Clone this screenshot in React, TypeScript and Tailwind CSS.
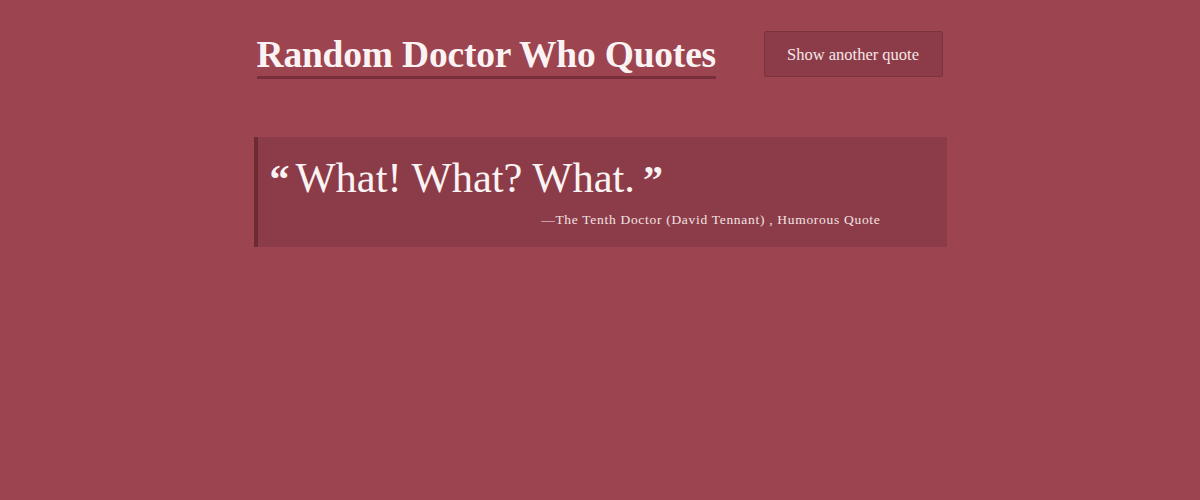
export default function App() {
  return (
    <div className="min-h-screen w-full bg-[#9c4450] font-['Liberation_Serif',serif] text-[#fbf3f3]">
      <div className="mx-auto w-[693px]">
        {/* Header */}
        <div className="flex items-start justify-between pt-[34px]">
          <h1 className="ml-[3px] inline-block border-b-[3px] border-[#77303b] text-[37.5px] font-bold leading-[42px] tracking-[-0.2px]">
            Random Doctor Who Quotes
          </h1>
          <button className="mr-[4px] -mt-[3px] h-[46px] w-[179px] rounded-[2px] border border-[#7a323d] bg-[#8c3c48] pt-[3px] text-[16.5px] text-[#f4e6e8]">
            Show another quote
          </button>
        </div>

        {/* Quote */}
        <div className="mt-[58px] h-[110px] border-l-4 border-[#6c2a34] bg-[#8c3c48] pl-[12px] pr-[66px] pt-[15px]">
          <p className="flex items-start text-[42.5px] leading-[52px]">
            <span className="mr-[6px] mt-[2px] text-[40px] font-bold">“</span>
            <span>What! What? What.</span>
            <span className="ml-[8px] mt-[2px] text-[40px] font-bold">”</span>
          </p>
          <p className="mt-[4px] text-right text-[13.5px] tracking-[0.7px] text-[#f2e2e4]">
            —The Tenth Doctor (David Tennant) , Humorous Quote
          </p>
        </div>
      </div>
    </div>
  );
}
